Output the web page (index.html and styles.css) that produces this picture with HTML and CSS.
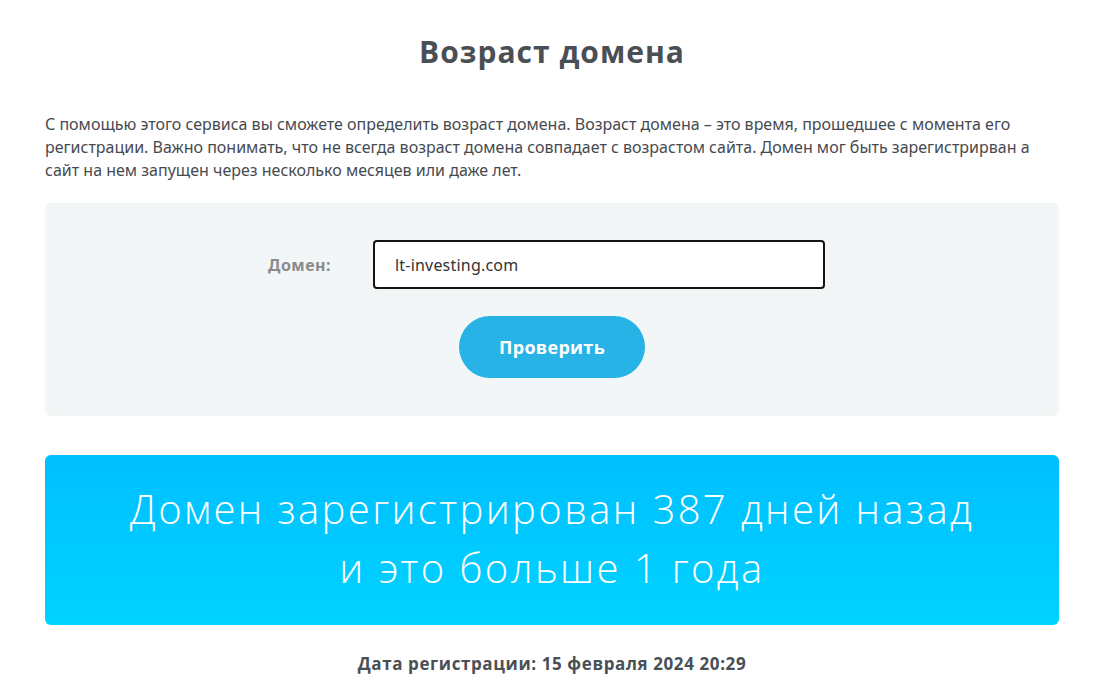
FILE: index.html
```html
<!DOCTYPE html>
<html lang="ru">
<head>
<meta charset="utf-8">
<title>Возраст домена</title>
<link rel="stylesheet" href="styles.css">
</head>
<body>
<main class="page">
  <h1 class="title">Возраст домена</h1>
  <p class="intro">С помощью этого сервиса вы сможете определить возраст домена. Возраст домена – это время, прошедшее с момента его регистрации. Важно понимать, что не всегда возраст домена совпадает с возрастом сайта. Домен мог быть зарегистрирван а сайт на нем запущен через несколько месяцев или даже лет.</p>
  <form class="check-form">
    <div class="field-row">
      <label class="field-label" for="domain">Домен:</label>
      <input class="field-input" id="domain" type="text" value="lt-investing.com">
    </div>
    <button class="check-btn" type="button">Проверить</button>
  </form>
  <div class="result">
    <div class="result-line">Домен зарегистрирован 387 дней назад</div>
    <div class="result-line">и это больше 1 года</div>
  </div>
  <p class="reg-date">Дата регистрации: 15 февраля 2024 20:29</p>
</main>
</body>
</html>
```
FILE: styles.css
```css
* { box-sizing: border-box; }
html, body { margin: 0; padding: 0; background: #fff; }
body { font-family: "Open Sans", "Noto Sans", sans-serif; color: #464a50; }
.page { width: 1014px; margin: 0 0 0 45px; padding-top: 32px; }
.title {
  margin: 0;
  text-align: center;
  font-family: "Open Sans", sans-serif;
  font-weight: 700;
  font-size: 30px;
  letter-spacing: 1px;
  line-height: 40px;
  color: #4a4f55;
}
.intro {
  margin: 41px 0 0;
  font-family: "Noto Sans", sans-serif;
  font-size: 16px;
  line-height: 23px;
  color: #464a50;
}
.check-form {
  margin-top: 21px;
  background: #f3f6f7;
  border-radius: 6px;
  height: 213px;
  padding-top: 37px;
  display: flex;
  flex-direction: column;
  align-items: center;
}
.field-row { display: flex; align-items: center; margin-right: 11px; }
.field-label {
  width: 105px;
  font-family: "Noto Sans", sans-serif;
  font-weight: 700;
  font-size: 16px;
  letter-spacing: 0.5px;
  color: #8c8c8c;
}
.field-input {
  width: 452px;
  height: 49px;
  border: 2px solid #141414;
  border-radius: 4px;
  padding: 0 20px;
  font-family: "Noto Sans", sans-serif;
  font-size: 16px;
  letter-spacing: 0.2px;
  color: #333;
  background: #fff;
  outline: none;
}
.check-btn {
  margin-top: 27px;
  width: 186px;
  height: 62px;
  border: none;
  border-radius: 31px;
  background: #27b3e6;
  color: #fff;
  font-family: "Open Sans", sans-serif;
  font-weight: 700;
  font-size: 18px;
  letter-spacing: 0.3px;
  cursor: pointer;
}
.result {
  margin-top: 39px;
  height: 170px;
  border-radius: 6px;
  background: linear-gradient(180deg, #00bfff 0%, #00d3ff 100%);
  color: #fff;
  text-align: center;
  padding-top: 24px;
  font-family: "Open Sans", sans-serif;
  font-weight: 300;
  font-size: 40px;
  letter-spacing: 2.4px;
  line-height: 59px;
}
.reg-date {
  margin: 27px 0 0;
  text-align: center;
  font-family: "Open Sans", sans-serif;
  font-weight: 700;
  font-size: 17px;
  letter-spacing: 0.6px;
  color: #4a4f55;
}
```
